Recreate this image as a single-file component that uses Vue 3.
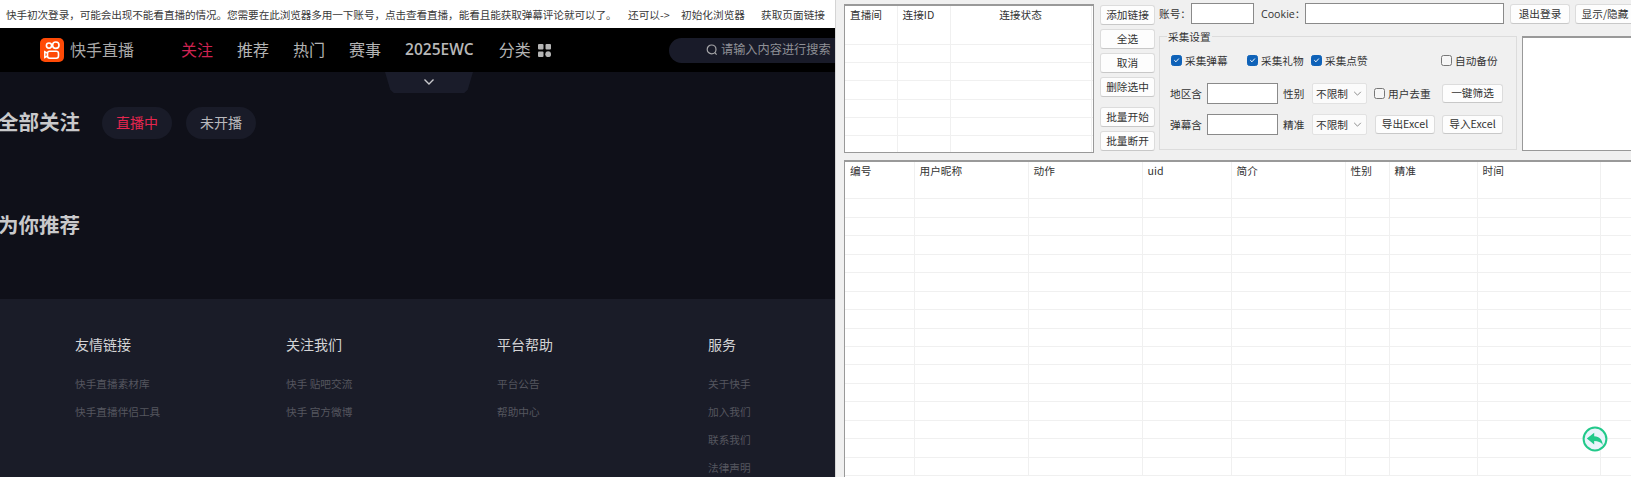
<script setup>
const topCols = [
  { label: '直播间', w: 52 },
  { label: '连接ID', w: 53 },
  { label: '连接状态', w: 141, center: true },
  { label: '', w: 2 }
]
const topRows = Array.from({ length: 7 })
const mainCols = [
  { label: '编号', w: 69 },
  { label: '用户昵称', w: 114 },
  { label: '动作', w: 114 },
  { label: 'uid', w: 89 },
  { label: '简介', w: 114 },
  { label: '性别', w: 44 },
  { label: '精准', w: 88 },
  { label: '时间', w: 123 },
  { label: '', w: 40 }
]
const mainRows = Array.from({ length: 16 })
const nav = ['关注', '推荐', '热门', '赛事', '2025EWC', '分类']
const footer = [
  { title: '友情链接', links: ['快手直播素材库', '快手直播伴侣工具'] },
  { title: '关注我们', links: ['快手 贴吧交流', '快手 官方微博'] },
  { title: '平台帮助', links: ['平台公告', '帮助中心'] },
  { title: '服务', links: ['关于快手', '加入我们', '联系我们', '法律声明'] }
]
</script>

<template>
  <div class="app">
    <section class="left">
      <div class="notice">
        <span class="notice-main">快手初次登录，可能会出现不能看直播的情况。您需要在此浏览器多用一下账号，点击查看直播，能看且能获取弹幕评论就可以了。</span>
        <span class="n1">还可以-&gt;</span>
        <span class="n2">初始化浏览器</span>
        <span class="n3">获取页面链接</span>
      </div>
      <header class="nav">
        <svg class="logo" viewBox="0 0 24 24" width="24" height="24">
          <rect width="24" height="24" rx="5" fill="#ff4a06" />
          <circle cx="9" cy="7.6" r="2.6" fill="none" stroke="#fff" stroke-width="1.6" />
          <circle cx="15.8" cy="7.2" r="3.2" fill="none" stroke="#fff" stroke-width="1.6" />
          <rect x="7.5" y="13.2" width="11" height="7" rx="2.2" fill="none" stroke="#fff" stroke-width="1.6" />
          <path d="M7.5 15.2 L4.8 13.8 V19.4 L7.5 18" fill="none" stroke="#fff" stroke-width="1.5" />
        </svg>
        <span class="brand">快手直播</span>
        <nav class="menu">
          <span v-for="(n, i) in nav" :key="n" :class="['item', { active: i === 0, latin: i === 4 }]">{{ n }}</span>
          <svg class="grid-icon" viewBox="0 0 13 13" width="13" height="13">
            <rect x="0" y="0" width="5.5" height="5.5" rx="1" fill="#b5b5b5" />
            <rect x="7.5" y="0" width="5.5" height="5.5" rx="1" fill="#b5b5b5" />
            <rect x="0" y="7.5" width="5.5" height="5.5" rx="1" fill="#b5b5b5" />
            <circle cx="10.2" cy="10.2" r="2.9" fill="#b5b5b5" />
          </svg>
        </nav>
        <div class="search">
          <svg viewBox="0 0 12 12" width="12" height="12">
            <circle cx="5.6" cy="5.4" r="4.4" fill="none" stroke="#a5a5a8" stroke-width="1.2" />
            <path d="M8.8 8.6 L10.6 10.6" stroke="#a5a5a8" stroke-width="1.2" />
          </svg>
          <span class="search-text">请输入内容进行搜索</span>
        </div>
      </header>
      <main class="body">
        <div class="pull">
          <svg viewBox="0 0 12 8" width="12" height="8">
            <path d="M1.5 1.5 L6 6 L10.5 1.5" fill="none" stroke="#c8c8cc" stroke-width="1.4" />
          </svg>
        </div>
        <div class="follow">
          <h2>全部关注</h2>
          <span class="pill on">直播中</span>
          <span class="pill">未开播</span>
        </div>
        <h2 class="rec">为你推荐</h2>
      </main>
      <footer class="foot">
        <div v-for="c in footer" :key="c.title" class="fcol">
          <h3>{{ c.title }}</h3>
          <a v-for="l in c.links" :key="l">{{ l }}</a>
        </div>
      </footer>
    </section>

    <section class="panel">
      <div class="upper">
        <div class="tbl small">
          <table>
            <colgroup><col v-for="(c, i) in topCols" :key="i" :style="{ width: c.w + 'px' }" /></colgroup>
            <thead><tr><th v-for="(c, i) in topCols" :key="i" :class="{ center: c.center }">{{ c.label }}</th></tr></thead>
            <tbody><tr v-for="(r, i) in topRows" :key="i"><td v-for="(c, j) in topCols" :key="j"></td></tr></tbody>
          </table>
        </div>
        <div class="btns">
          <button class="b">添加链接</button>
          <button class="b">全选</button>
          <button class="b">取消</button>
          <button class="b">删除选中</button>
          <button class="b gap">批量开始</button>
          <button class="b">批量断开</button>
        </div>
        <div class="settings">
          <div class="account">
            <label class="acc">账号：</label>
            <input class="inp w-acc" />
            <label class="ck">Cookie：</label>
            <input class="inp w-ck" />
            <button class="b top1">退出登录</button>
            <button class="b top2">显示/隐藏</button>
          </div>
          <div class="lower">
            <fieldset class="group">
              <legend>采集设置</legend>
              <div class="row checks">
                <label class="chk c1"><i class="box on"><svg viewBox="0 0 10 10" width="10" height="10"><path d="M2.5 5.2 L4.4 7 L7.6 3.4" fill="none" stroke="#fff" stroke-width="1.1" /></svg></i>采集弹幕</label>
                <label class="chk c2"><i class="box on"><svg viewBox="0 0 10 10" width="10" height="10"><path d="M2.5 5.2 L4.4 7 L7.6 3.4" fill="none" stroke="#fff" stroke-width="1.1" /></svg></i>采集礼物</label>
                <label class="chk c3"><i class="box on"><svg viewBox="0 0 10 10" width="10" height="10"><path d="M2.5 5.2 L4.4 7 L7.6 3.4" fill="none" stroke="#fff" stroke-width="1.1" /></svg></i>采集点赞</label>
                <label class="chk"><i class="box"></i>自动备份</label>
              </div>
              <div class="row r2">
                <span class="lab">地区含</span>
                <input class="inp w-f" />
                <span class="lab2">性别</span>
                <div class="sel">不限制<svg viewBox="0 0 10 6" width="9" height="5"><path d="M1 1 L5 5 L9 1" fill="none" stroke="#777" stroke-width="1" /></svg></div>
                <label class="chk c4"><i class="box"></i>用户去重</label>
                <button class="b act">一键筛选</button>
              </div>
              <div class="row r3">
                <span class="lab">弹幕含</span>
                <input class="inp w-f" />
                <span class="lab2">精准</span>
                <div class="sel">不限制<svg viewBox="0 0 10 6" width="9" height="5"><path d="M1 1 L5 5 L9 1" fill="none" stroke="#777" stroke-width="1" /></svg></div>
                <button class="b act first">导出Excel</button>
                <button class="b act">导入Excel</button>
              </div>
            </fieldset>
            <div class="log"></div>
          </div>
        </div>
      </div>
      <div class="tbl main">
        <table>
          <colgroup><col v-for="(c, i) in mainCols" :key="i" :style="{ width: c.w + 'px' }" /></colgroup>
          <thead><tr><th v-for="(c, i) in mainCols" :key="i">{{ c.label }}</th></tr></thead>
          <tbody><tr v-for="(r, i) in mainRows" :key="i"><td v-for="(c, j) in mainCols" :key="j"></td></tr></tbody>
        </table>
      </div>
      <svg class="back" viewBox="0 0 26 26" width="26" height="26">
        <circle cx="13" cy="13" r="11.4" fill="#eaf4fb" stroke="#22c98a" stroke-width="2" />
        <path d="M4.8 12.6 L12.2 6.8 V10.2 C17.6 10.4 20.4 13.8 20.8 19 C18.8 16 16.2 15 12.2 15 V18.4 Z" fill="#22c98a" />
      </svg>
    </section>
  </div>
</template>

<style>
html, body { margin: 0; background: #f0f0f0; overflow: hidden; }
</style>

<style scoped>
.app {
  width: 1631px;
  height: 477px;
  display: flex;
  overflow: hidden;
  position: relative;
  font-family: "Noto Sans CJK SC", "Noto Sans", sans-serif;
  font-size: 10.67px;
  color: #333;
}
.left {
  width: 835px;
  flex: none;
  display: flex;
  flex-direction: column;
  overflow: hidden;
  background: #0f1019;
}
.notice {
  height: 28px;
  flex: none;
  background: #fff;
  display: flex;
  align-items: center;
  padding-left: 6px;
  white-space: nowrap;
  color: #3a3a3a;
}
.notice-main { width: 622px; flex: none; letter-spacing: -0.13px; }
.n1 { width: 53px; flex: none; }
.n2 { width: 80px; flex: none; }
.nav {
  height: 44px;
  flex: none;
  background: #000;
  display: flex;
  align-items: center;
  padding-left: 40px;
  white-space: nowrap;
}
.logo { flex: none; }
.brand { font-size: 16px; color: #a8a8a8; margin-left: 6px; width: 111px; flex: none; padding-bottom: 2px; }
.menu { display: flex; align-items: center; width: 488px; flex: none; }
.item { font-size: 16px; color: #b4b4b4; margin-right: 24px; padding-bottom: 2px; }
.item.active { color: #cf2352; }
.item.latin { font-family: "Open Sans", sans-serif; font-weight: 600; color: #b8b8b8; font-size: 15.5px; margin-right: 25px; }
.item:nth-child(6) { margin-right: 7px; }
.grid-icon { flex: none; }
.search {
  flex: 1;
  height: 25px;
  border-radius: 13px 0 0 13px;
  background: #191b29;
  display: flex;
  align-items: center;
  gap: 3px;
  padding-left: 37px;
  font-size: 12.2px;
  color: #8f9096;
}
.search-text { padding-bottom: 2px; }
.body { height: 227px; flex: none; }
.pull {
  width: 88px;
  height: 21px;
  margin-left: 385px;
  background: #1a1c2a;
  clip-path: polygon(0 0, 100% 0, 94% 85%, 90% 100%, 10% 100%, 6% 85%);
  display: flex;
  align-items: center;
  justify-content: center;
  padding-bottom: 2px;
  box-sizing: border-box;
}
.follow {
  display: flex;
  align-items: center;
  margin: 14px 0 0 -2px;
  height: 32px;
}
h2 { margin: 0; font-size: 20.5px; font-weight: 700; color: #c9c9cb; line-height: 29px; }
.follow h2 { width: 104px; flex: none; margin-bottom: 3px; }
.pill {
  width: 70px;
  height: 32px;
  border-radius: 16px;
  background: #191b28;
  color: #b9b9bd;
  font-size: 14px;
  line-height: 30px;
  text-align: center;
  margin-right: 14px;
}
.pill.on { color: #e5264f; }
.rec { margin: 71px 0 0 -2px; }
.foot {
  flex: 1;
  background: #1a1c28;
  display: flex;
  padding: 35px 0 0 75px;
}
.fcol { width: 211px; flex: none; display: flex; flex-direction: column; }
h3 { margin: 0 0 21.5px; font-size: 14px; font-weight: 400; line-height: 20px; color: #d4d4d6; }
.fcol a { color: #55565f; font-size: 10.67px; line-height: 16px; margin-bottom: 12.3px; white-space: nowrap; }

.panel {
  flex: 1;
  min-width: 0;
  background: #f0f0f0;
  border-left: 1px solid #d4d4d4;
  padding: 4px 0 0 8px;
  display: flex;
  flex-direction: column;
  gap: 7px;
  overflow: hidden;
}
.upper { display: flex; height: 149px; flex: none; }
.tbl {
  background: #fff;
  border: 1px solid #999;
  border-top-width: 2px;
  box-sizing: border-box;
  overflow: hidden;
}
.small { width: 250px; height: 149px; flex: none; }
.main { flex: 1; border-bottom: 0; border-right: 0; min-height: 0; }
table { border-collapse: collapse; table-layout: fixed; width: max-content; }
th {
  height: 20px;
  padding: 0 0 3px 5px;
  font-weight: 400;
  text-align: left;
  color: #333;
  white-space: nowrap;
  border-right: 1px solid #f0f0f0;
  box-sizing: border-box;
}
th.center { text-align: center; padding: 0 0 3px; }
.small td { height: 18.4px; padding: 0; box-sizing: border-box; border-right: 1px solid #f0f0f0; border-bottom: 1px solid #f0f0f0; }
.main th { height: 18.5px; padding: 0 0 1px 5px; }
.main td { height: 18.45px; padding: 0; box-sizing: border-box; border-right: 1px solid #f0f0f0; border-bottom: 1px solid #f0f0f0; }
.small tbody tr:first-child td { height: 18px; }
.btns {
  width: 55px;
  flex: none;
  margin-left: 6px;
  margin-top: 1px;
  display: flex;
  flex-direction: column;
  gap: 4px;
}
.b {
  height: 20px;
  padding: 0 0 1px;
  font: inherit;
  color: #333;
  background: #fdfdfd;
  border: 1px solid #dcdcdc;
  border-bottom-color: #c8c8c8;
  border-radius: 3px;
  white-space: nowrap;
  flex: none;
}
.b.gap { margin-top: 6px; }
.settings {
  flex: 1;
  min-width: 0;
  margin-left: 4px;
  margin-top: -4px;
  display: flex;
  flex-direction: column;
}
.account {
  display: flex;
  align-items: center;
  height: 25px;
  white-space: nowrap;
  padding-top: 2px;
  box-sizing: border-box;
}
.acc { width: 32px; flex: none; }
.ck { width: 44px; flex: none; margin-left: 7px; font-family: "Open Sans", "Noto Sans CJK SC", sans-serif; }
.inp {
  box-sizing: border-box;
  height: 21px;
  padding: 0;
  background: #fff;
  border: 1px solid #8a8a8a;
  outline: 0;
  flex: none;
}
.w-acc { width: 63px; }
.w-ck { width: 199px; }
.top1 { width: 60px; margin-left: 6px; }
.top2 { width: 60px; margin-left: 5px; }
.lower { display: flex; margin-top: 11px; margin-left: 0; align-items: flex-start; }
.group {
  width: 358px;
  height: 114px;
  box-sizing: border-box;
  flex: none;
  margin: 0;
  padding: 0 0 0 10px;
  border: 1px solid #dcdcdc;
  position: relative;
}
legend {
  position: absolute;
  top: -7px;
  left: 7px;
  padding: 0 1px;
  background: #f0f0f0;
  line-height: 14px;
}
.row { display: flex; align-items: center; white-space: nowrap; }
.checks { height: 16px; margin: 15px 0 0 1px; }
.chk { display: flex; align-items: center; gap: 3px; flex: none; }
.c1 { width: 76px; }
.c2 { width: 64px; }
.c3 { width: 130px; }
.c4 { width: 68px; margin-left: 7px; }
.box {
  width: 11px;
  height: 11px;
  border: 1px solid #777;
  border-radius: 2.5px;
  background: #f6f6f6;
  display: flex;
  align-items: center;
  justify-content: center;
  box-sizing: border-box;
  flex: none;
}
.box.on { background: #0f62b8; border-color: #0f62b8; }
.r2 { margin-top: 14px; height: 22px; }
.r3 { margin-top: 9px; height: 22px; }
.lab { width: 37px; flex: none; }
.w-f { width: 71px; height: 21px; }
.lab2 { width: 29px; flex: none; margin-left: 5px; }
.sel {
  box-sizing: border-box;
  width: 55px;
  height: 21px;
  flex: none;
  background: #fbfbfb;
  border: 1px solid #e2e2e2;
  border-radius: 2px;
  padding: 0 4px 0 3px;
  display: flex;
  align-items: center;
  justify-content: space-between;
}
.act { width: 61px; height: 19px; }
.first { width: 60px; margin: 0 7px 0 8px; }
.log {
  flex: 1;
  height: 115px;
  margin-left: 5px;
  box-sizing: border-box;
  background: #fff;
  border: 1px solid #999;
  border-top-width: 2px;
  border-right: 0;
}
.back { position: absolute; left: 1582px; top: 426px; }
</style>
